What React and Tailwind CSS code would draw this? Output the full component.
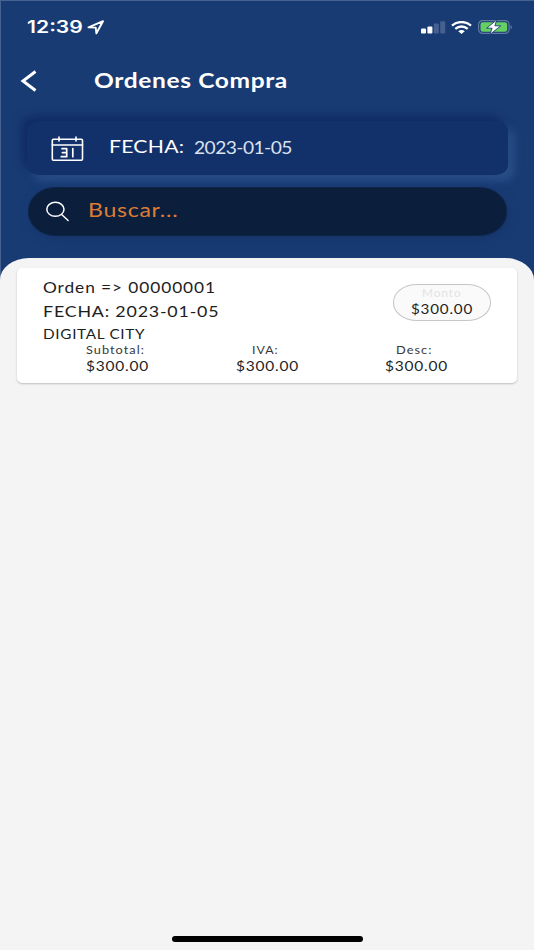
import { useLayoutEffect, useRef, useState } from 'react';

// Single line of text stretched horizontally to fill the width of its box.
function Wide({ className = '', children }) {
  const box = useRef(null);
  const text = useRef(null);
  const [scale, setScale] = useState(1);
  useLayoutEffect(() => {
    setScale(box.current.clientWidth / text.current.offsetWidth);
  }, []);
  return (
    <div ref={box} className={`shrink-0 whitespace-pre ${className}`}>
      <span ref={text} className="inline-block origin-left" style={{ transform: `scaleX(${scale})` }}>
        {children}
      </span>
    </div>
  );
}

function StatusBar() {
  return (
    <div className="flex h-[54px] items-center pl-[27px] pr-[21px]">
      <Wide className="w-[56px] font-['Inter'] text-[17px] font-semibold leading-[54px]">12:39</Wide>
      <svg className="ml-[4px] h-[15px] w-[18px]" viewBox="0 0 18 15" fill="none" stroke="white" strokeWidth="1.9" strokeLinejoin="round">
        <path d="M1.5 7.4 16 1.2 9.4 13.3 8.7 7.6Z" />
      </svg>
      <svg className="ml-auto h-[13px] w-[25px]" viewBox="0 0 25 13">
        <rect x="0" y="7.6" width="5" height="5" rx="1" fill="white" />
        <rect x="6.4" y="5.6" width="5" height="7" rx="1" fill="white" />
        <rect x="12.8" y="2.600" width="5" height="10" rx="1" fill="#46618f" />
        <rect x="19.2" y="0.200" width="5" height="12.4" rx="1" fill="#46618f" />
      </svg>
      <svg className="ml-[5px] h-[13px] w-[21px]" viewBox="0 0 21 13" fill="none" stroke="white" strokeWidth="2.3">
        <path d="M1 4.6C6.5-.2 14.500-.2 20 4.600" />
        <path d="M4.300 7.900C7.900 4.700 13.100 4.700 16.700 7.900" />
        <path d="M7.200 10.200C9.200 8.500 11.800 8.500 13.800 10.200L10.500 13Z" fill="white" stroke="none" />
      </svg>
      <svg className="ml-[6px] h-[16px] w-[35px]" viewBox="0 0 35 16">
        <rect x="0.6" y="1.600" width="30.500" height="12.800" rx="4" fill="none" stroke="#61799f" strokeWidth="1.200" />
        <rect x="2.500" y="3.300" width="26.700" height="9.400" rx="2.300" fill="#65cf63" />
        <path d="M32.500 6v4.200c2-.8 2-3.400 0-4.200Z" fill="#61799f" />
        <path d="M18.800 0.800 8.700 9.200h5.400l-2.200 6.300L22.800 6.800h-5.900Z" fill="white" stroke="#193b74" strokeWidth="0.9" />
      </svg>
    </div>
  );
}

function Amount({ label, labelWidth }) {
  return (
    <div className="flex w-[63px] flex-col items-start">
      <Wide className={`${labelWidth} h-[16px] text-[11px] leading-[16px] tracking-[0.9px] text-[#383838]`}>{label}</Wide>
      <Wide className="w-[63px] h-[16px] text-[13.500px] leading-[16px] tracking-[0.7px]">$300.00</Wide>
    </div>
  );
}

export default function App() {
  return (
    <div className="flex h-[950px] w-[534px] flex-col overflow-hidden bg-[#193b74] font-['Lato','Open_Sans',sans-serif] text-white shadow-[inset_1px_1px_0_#46628f]">
      <StatusBar />
      <header className="flex h-[54px] items-center pl-[20px]">
        <svg className="h-[22px] w-[17px]" viewBox="0 0 17 22" fill="none" stroke="white" strokeWidth="3">
          <path d="M15.500 1.500 3 11 15.500 20.500" />
        </svg>
        <Wide className="-mt-[2px] ml-[57px] w-[194px] text-[20px] font-bold leading-[52px] tracking-[0.5px]">Ordenes Compra</Wide>
      </header>

      <section className="ml-[27px] mt-[13px] flex h-[54px] w-[481px] items-center rounded-[12px/10px] bg-[#12316b] pl-[24px] shadow-[-5px_-5px_9px_#102a64,6px_6px_9px_#2b5089]">
        <svg className="mt-[2px] h-[26px] w-[33px]" viewBox="0 0 33 26" fill="none" stroke="white" strokeWidth="1.600" strokeLinecap="round" strokeLinejoin="round">
          <rect x="1.300" y="3.300" width="30.200" height="21" rx="1.200" />
          <path d="M1.300 9h30.200M8 1v4M25 1v4" />
          <path d="M11 12.700h4.700v8H10.300M11.400 16.600h4.300M21.800 12.700v8" strokeWidth="1.700" />
        </svg>
        <Wide className="-mt-[2px] ml-[25px] w-[75px] text-[17.500px] leading-[52px] tracking-[0.2px]">FECHA:</Wide>
        <Wide className="-mt-[2px] ml-[10px] w-[98px] text-[18px] leading-[52px] tracking-[-0.5px] text-[#dce3ef]">2023-01-05</Wide>
      </section>

      <section className="ml-[27.500px] mt-[12px] flex h-[48.500px] w-[479px] items-center rounded-[28px/24px] bg-[#0b1f3d] pl-[17px] shadow-[2px_3px_10px_#16346a,inset_0_0_2px_#15315a]">
        <svg className="h-[21px] w-[25px]" viewBox="0 0 25 21" fill="none" stroke="white" strokeWidth="1.500" strokeLinecap="round">
          <ellipse cx="10.400" cy="8.300" rx="8.600" ry="7" />
          <path d="m16.600 13.500 6.500 6" />
        </svg>
        <Wide className="-mt-[2px] ml-[18px] w-[90px] text-[19.500px] leading-[44px] tracking-[0.6px] text-[#dd7d33]">Buscar...</Wide>
      </section>

      <main className="mt-[22.500px] flex flex-1 flex-col items-center rounded-t-[29px_22px] bg-[#f4f4f4] text-[#1e1e1e]">
        <article className="mt-[10px] flex h-[115px] w-[500px] flex-col rounded-[5px] bg-white shadow-[0_1px_2px_#bdbdbd]">
          <div className="flex justify-between pl-[26px] pr-[26px]">
            <div className="flex flex-col pt-[7px]">
              <Wide className="w-[173px] h-[24px] text-[15px] leading-[24px] tracking-[0.8px]">{'Orden => 00000001'}</Wide>
              <Wide className="w-[176px] h-[24px] text-[15.500px] leading-[25px] tracking-[0.7px]">FECHA: 2023-01-05</Wide>
              <Wide className="w-[102px] h-[19px] text-[13.500px] leading-[23px] tracking-[0.6px]">DIGITAL CITY</Wide>
            </div>
            <div className="mt-[16px] flex h-[37px] w-[98px] flex-col items-center rounded-[24px/18px] border-[1.500px] border-[#c6c6c6] bg-[#fafafa]">
              <Wide className="w-[40px] h-[15px] text-[11px] leading-[15px] tracking-[0.8px] text-[#e3e3e3]">Monto</Wide>
              <Wide className="w-[62px] h-[17px] text-[13.500px] leading-[19px] tracking-[0.7px]">$300.00</Wide>
            </div>
          </div>
          <div className="flex pl-[69px] gap-[86.500px]">
            <Amount label="Subtotal:" labelWidth="w-[59px]" />
            <Amount label="IVA:" labelWidth="ml-[16px] w-[27px]" />
            <Amount label="Desc:" labelWidth="ml-[11px] w-[36px]" />
          </div>
        </article>
        <div className="mb-[8px] mt-auto h-[6px] w-[191px] rounded-full bg-black" />
      </main>
    </div>
  );
}
